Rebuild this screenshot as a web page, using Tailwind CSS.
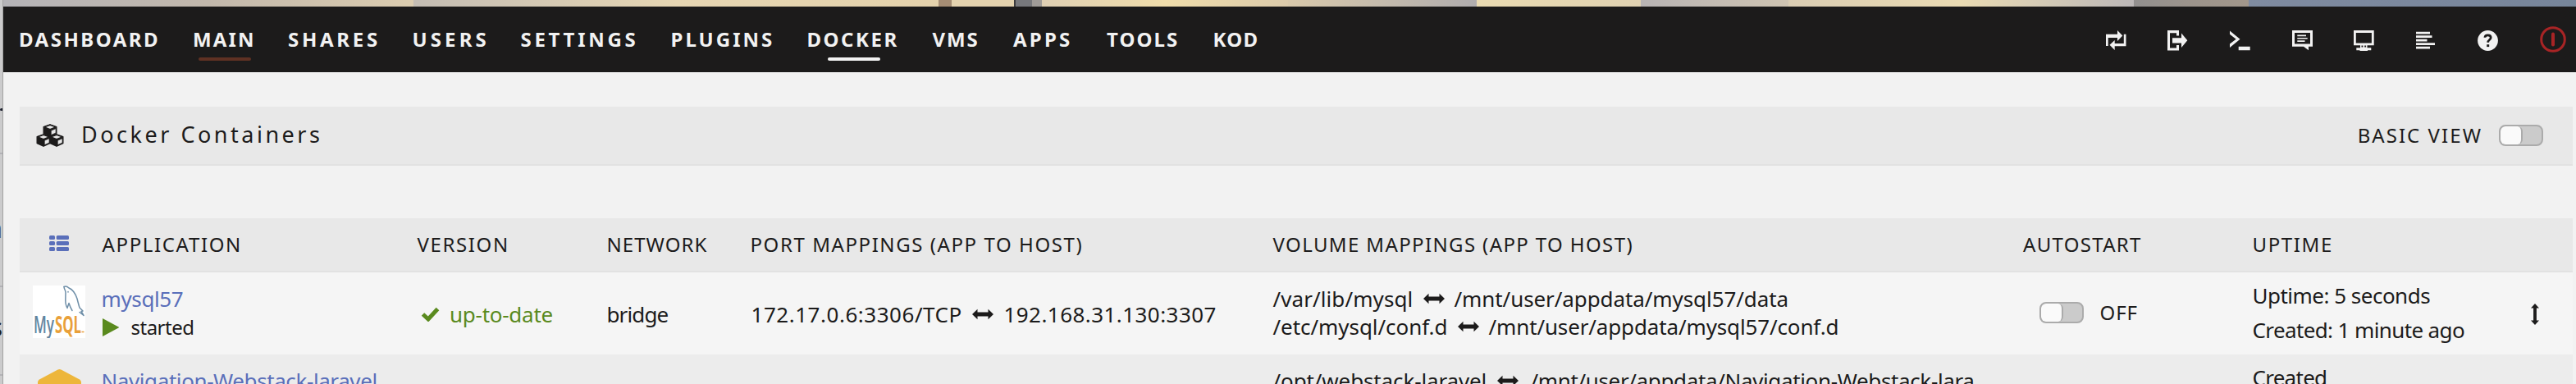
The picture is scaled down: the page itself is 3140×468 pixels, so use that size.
<!DOCTYPE html>
<html lang="en">
<head>
<meta charset="utf-8">
<title>Docker Containers</title>
<script src="https://cdn.jsdelivr.net/npm/@tailwindcss/browser@4"></script>
</head>
<body class="w-[3140px] h-[468px] overflow-hidden bg-[#f2f2f2] text-[#1c1b1b] font-['Noto_Sans',sans-serif] whitespace-nowrap">
<svg class="hidden">
  <symbol id="lr" viewBox="0 0 26 14"><path d="M0 7 6.5 .8V4.6H19.5V.8L26 7l-6.500 6.200V9.400H6.500v3.800z" fill="#1c1b1b"/></symbol>
</svg>
<div class="flex w-full h-full">

  <!-- edge of the window behind -->
  <div class="w-1 h-full shrink-0 overflow-hidden bg-[#cbcbcc] border-r border-[#a2a2a2] text-[30px] leading-[30px]">
    <div class="h-[132px]"></div>
    <div class="h-[3px] bg-[#1e2230] rounded-l"></div>
    <div class="h-[51px]"></div>
    <div class="h-[2px] bg-[#b2b2b6]"></div>
    <div class="h-[76px]"></div>
    <div class="h-[30px] flex justify-end text-[#4a4e55]"><span>a</span></div>
    <div class="h-[54px]"></div>
    <div class="h-[2px] bg-[#b2b2b6]"></div>
    <div class="h-[34px]"></div>
    <div class="h-[30px] flex justify-end"><span>s</span></div>
    <div class="h-[42px]"></div>
    <div class="h-[2px] bg-[#b2b2b6]"></div>
  </div>

  <div class="flex-1 min-w-0">
    <!-- banner strip -->
    <div class="h-2 flex">
      <div class="w-[500px] bg-linear-to-r from-[#b5b4b8] via-[#c2b8ac] to-[#dccdb0]"></div>
      <div class="w-[640px] bg-linear-to-r from-[#c4bdb4] via-[#e6d6b3] to-[#e4d2ac]"></div>
      <div class="w-[16px] bg-[#a58d74]"></div>
      <div class="w-[76px] bg-[#e4d3af]"></div>
      <div class="w-[22px] bg-[#77787c] border-l-2 border-[#3c3b3c]"></div>
      <div class="w-[12px] bg-[#a09c98]"></div>
      <div class="w-[300px] bg-linear-to-r from-[#dfd0b4] via-[#f0ddab] to-[#dccbab]"></div>
      <div class="w-[230px] bg-linear-to-r from-[#d9c9ab] to-[#b0adae]"></div>
      <div class="w-[200px] bg-linear-to-r from-[#eadbb2] to-[#e0d2b2]"></div>
      <div class="w-[180px] bg-linear-to-r from-[#b8b4b4] to-[#cfc4b2]"></div>
      <div class="w-[421px] bg-linear-to-r from-[#dacdb3] via-[#eadbb3] to-[#bcb8b8]"></div>
      <div class="w-[140px] bg-linear-to-r from-[#92908f] via-[#9c948c] to-[#a2978b]"></div>
      <div class="flex-1 bg-linear-to-r from-[#7f8ba0] to-[#77859a]"></div>
    </div>

    <!-- navigation -->
    <nav class="h-20 bg-[#1c1b1b] text-[#f2f2f2] flex items-center justify-between pl-[19px]">
      <div class="grid grid-cols-[212px_116px_151.500px_132px_183px_166px_153px_98.500px_114px_129.500px_90px] h-20 text-[24px] leading-[79px] font-bold">
        <div class="tracking-[2.49px]">DASHBOARD</div>
        <div class="tracking-[2.14px]">MAIN<div class="w-16 h-1 ml-[7px] -mt-[17px] rounded-full bg-[#5f3123]"></div></div>
        <div class="tracking-[3.72px]">SHARES</div>
        <div class="tracking-[4.11px]">USERS</div>
        <div class="tracking-[3.71px]">SETTINGS</div>
        <div class="tracking-[3.01px]">PLUGINS</div>
        <div class="tracking-[2.53px]">DOCKER<div class="w-16 h-1 ml-[25px] -mt-[17px] rounded-full bg-[#f2f2f2]"></div></div>
        <div class="tracking-[1.88px]">VMS</div>
        <div class="tracking-[3.19px]">APPS</div>
        <div class="tracking-[2.06px]">TOOLS</div>
        <div class="tracking-[1.28px]">KOD</div>
      </div>
      <div class="flex items-center gap-[50.600px] pr-3 pt-[2px] h-20">
        <svg class="w-[25px] h-[25px]" viewBox="0 0 25 25" fill="#f2f2f2"><path d="M0 4.700H14V0l6.300 6.500L14 13V9H2.700V19H0zM24.500 4.700v14.600H10.700V24L4.500 17.700 10.700 12v4H21.800V4.700z"/></svg>
        <svg class="w-[25px] h-[25px]" viewBox="0 0 25 25" fill="#f2f2f2"><path d="M0 0H14V6.500H11V3.200H3V21.400H11V18H14V24.600H0zM6 9.300H17V3.500L24.300 12.300 17 21V15.500H6z"/></svg>
        <svg class="w-[25px] h-[25px]" viewBox="0 0 25 25" fill="#f2f2f2"><path d="M0 .5 12.500 10.700 0 21V16.600L7.600 10.700 0 4.800zM10.700 19.800H24.700V24.200H10.700z"/></svg>
        <svg class="w-[25px] h-[25px]" viewBox="0 0 25 25" fill="#f2f2f2"><path fill-rule="evenodd" d="M0 0H25V19.700H20V24.200L14 19.700H0zM3 3V16.600H22V3z"/><path d="M6.300 5.600H17V7.200H6.300zM6.300 9H18.700V10.600H6.300zM6.300 12.300H15.500V13.900H6.300z"/></svg>
        <svg class="w-[25px] h-[25px]" viewBox="0 0 25 25" fill="#f2f2f2"><path fill-rule="evenodd" d="M0 0H24.700V18.300H16.500V21.300H21.300V24.300H17V25H7.500V24.300H3.300V21.300H8V18.300H0zM2.800 3V15.400H21.900V3zM9.500 18.500V20.500H11.400V18.500zM13.200 18.500V20.500H15.100V18.500z"/></svg>
        <svg class="w-[25px] h-[25px]" viewBox="0 0 25 25" fill="#f2f2f2"><path d="M0 1.700H17V4.600H0zM0 6.200H19.500V9H0zM0 10.700H13.500V13.600H0zM0 15.200H23V18H0zM0 19.700H17V22.600H0z"/></svg>
        <svg class="w-[25px] h-[25px]" viewBox="0 0 25 25"><circle cx="12.500" cy="12.500" r="12.400" fill="#f2f2f2"/><path d="M8.900 8.800C9 6.600 10.500 5.800 12.500 5.800c2.200 0 3.700 1.100 3.700 3 0 2.900-3.500 2.600-3.500 6" fill="none" stroke="#1c1b1b" stroke-width="2.700"/><path d="M11.200 17.200h3v2.900h-3z" fill="#1c1b1b"/></svg>
        <svg class="w-8 h-8 -mt-[2px]" viewBox="0 0 32 32" fill="none" stroke="#a82425"><circle cx="16" cy="16" r="14.300" stroke-width="3"/><path d="M16 9.500v13" stroke-width="4" stroke-linecap="round"/></svg>
      </div>
    </nav>

    <main class="px-5 pr-1 pt-[42px]">
      <!-- page title -->
      <div class="h-[72px] bg-[#e8e8e8] border-b-2 border-[#e2e2e2] flex items-center justify-between pl-5 pr-9">
        <div class="flex items-center">
          <svg class="w-[34px] h-[28px] mr-[21px] -mt-px" viewBox="0 0 34 28">
            <g stroke="#1c1b1b" stroke-width="1.400" stroke-linejoin="round">
              <g id="cube"><path d="M17 .8 24.800 3.600V11.600L17 15.200 9.200 11.600V3.600z" fill="#1c1b1b"/><path d="M17 1.300 24 3.900 17 6.700 10 3.900z" fill="#e8e8e8"/><path d="M18.300 8.200 24 5.800V11L18.300 13.600z" fill="#e8e8e8" stroke-width=".6"/></g>
              <use href="#cube" x="-8" y="12"/><use href="#cube" x="8" y="12"/>
            </g>
          </svg>
          <h1 class="text-[27px] leading-[40px] pb-[2px] tracking-[3.510px]">Docker Containers</h1>
        </div>
        <div class="flex items-center">
          <span class="text-[24px] tracking-[2.050px] mr-[20px]">BASIC VIEW</span>
          <span class="w-[54px] h-[26px] rounded-[8px] border-2 border-[#ababab] bg-[#cbcbcb] overflow-hidden flex"><span class="w-[27px] h-full bg-[#fafafa] border-r-2 border-[#ababab] rounded-[6px]"></span></span>
        </div>
      </div>

      <!-- containers -->
      <div class="mt-16">
        <div class="h-[66px] bg-[#e8e8e8] border-b-2 border-[#e2e2e2] grid grid-cols-[100.500px_382.500px_229.500px_177px_638px_914.500px_278.500px_1fr] text-[24px] leading-[63px]">
          <div class="pl-9 pt-[21px]"><svg class="w-6 h-[19px]" viewBox="0 0 24 19" fill="#5a6fba"><rect width="7" height="5" rx="1.500"/><rect x="8.700" width="15.300" height="5" rx="1.500"/><rect y="7" width="7" height="5" rx="1.500"/><rect x="8.700" y="7" width="15.300" height="5" rx="1.500"/><rect y="14" width="7" height="5" rx="1.500"/><rect x="8.700" y="14" width="15.300" height="5" rx="1.500"/></svg></div>
          <div class="tracking-[1.640px]">APPLICATION</div>
          <div class="tracking-[1.610px] pl-[1.500px]">VERSION</div>
          <div class="tracking-[1.050px] pl-[3px]">NETWORK</div>
          <div class="tracking-[1.580px] pl-px">PORT MAPPINGS (APP TO HOST)</div>
          <div class="tracking-[1.380px]">VOLUME MAPPINGS (APP TO HOST)</div>
          <div class="tracking-[1.300px]">AUTOSTART</div>
          <div class="tracking-[1.620px] pl-px">UPTIME</div>
        </div>

        <div class="h-[100px] bg-[#f5f5f5] grid grid-cols-[100.500px_382.500px_229.500px_177px_638px_914.500px_278.500px_1fr] text-[26px] leading-[34px]">
          <div class="pl-4 pt-4">
            <svg class="w-16 h-16 bg-white" viewBox="0 0 64 64">
              <g fill="none" stroke="#6f8fa8" stroke-width="1.500" stroke-linecap="round" stroke-linejoin="round">
                <path d="M38 1.500C40 .5 42 1 44 3 49 5 52 10 54 16c1 4 2 8 3 11l4 4-2 .500 3 5-5-4"/>
                <path d="M38 1.500c0 3 2 4 2 7 0 4-.500 8 0 13 .500 3 1.500 5 2 6l2-6c1 3 2 6 4 9"/>
                <path d="M43 7.500v.500"/>
              </g>
              <text x="1" y="58" font-family="Open Sans, sans-serif" font-size="29" font-weight="600" fill="#6285a0" textLength="25" lengthAdjust="spacingAndGlyphs">My</text>
              <text x="27" y="58" font-family="Open Sans, sans-serif" font-size="29" font-weight="700" fill="#e9a03a" textLength="32" lengthAdjust="spacingAndGlyphs">SQL</text>
              <path d="M59.500 56.500h3" stroke="#e9a03a" stroke-width="1.500"/>
            </svg>
          </div>
          <div class="pt-[15px]">
            <div class="text-[#5a6fba] tracking-[-0.380px] -ml-px">mysql57</div>
            <div class="flex items-center"><svg class="w-[20.500px] h-[22px] mr-[14.500px]" viewBox="0 0 20.500 22"><path d="M0 0 20.500 11 0 22z" fill="#5a8a1e"/></svg><span class="text-[24px] pt-px tracking-[-0.500px]">started</span></div>
          </div>
          <div class="flex items-center text-[#5a8a1e] pl-[6px] pt-px"><svg class="w-[23px] h-[18px] mr-[12px]" viewBox="0 0 23 18"><path d="M2.500 9 9 15 20.500 2.500" fill="none" stroke="#5a8a1e" stroke-width="5"/></svg><span class="tracking-[-0.260px]">up-to-date</span></div>
          <div class="flex items-center tracking-[-0.880px] pl-[3px] pt-px">bridge</div>
          <div class="flex items-center pl-[2px] pt-px"><span class="tracking-[.53px] w-[269px]">172.17.0.6:3306/TCP</span><svg class="w-[26px] h-[14px] mr-[13px]"><use href="#lr"/></svg><span class="tracking-[.44px]">192.168.31.130:3307</span></div>
          <div class="pt-[15px]">
            <div class="flex items-center"><span class="w-[183px] tracking-[.08px]">/var/lib/mysql</span><svg class="w-[26px] h-[14px] mr-3"><use href="#lr"/></svg><span class="tracking-[-0.090px]">/mnt/user/appdata/mysql57/data</span></div>
            <div class="flex items-center"><span class="w-[225px] tracking-[-0.060px]">/etc/mysql/conf.d</span><svg class="w-[26px] h-[14px] mr-3"><use href="#lr"/></svg><span class="tracking-[-0.140px]">/mnt/user/appdata/mysql57/conf.d</span></div>
          </div>
          <div class="flex items-center pl-[19.500px] pb-[2px]">
            <span class="w-[54px] h-[26px] rounded-[8px] border-2 border-[#ababab] bg-[#cbcbcb] overflow-hidden flex mr-5"><span class="w-[27px] h-full bg-[#fafafa] border-r-2 border-[#ababab] rounded-[6px]"></span></span>
            <span class="text-[24px] tracking-[.9px]">OFF</span>
          </div>
          <div class="flex justify-between pl-px pr-[41px]">
            <div class="pt-[7px] leading-[42px]"><div class="tracking-[-0.510px]">Uptime: 5 seconds</div><div class="tracking-[-0.620px]">Created: 1 minute ago</div></div>
            <svg class="w-[10px] h-[26px] mt-[38px]" viewBox="0 0 10 26"><path d="M5 0 10 5.500H6.900V20.500H10L5 26 0 20.500H3.100V5.500H0z" fill="#1c1b1b"/></svg>
          </div>
        </div>

        <div class="h-[36px] overflow-hidden bg-[#ececec] grid grid-cols-[100.500px_382.500px_229.500px_177px_638px_914.500px_278.500px_1fr] text-[26px] leading-[34px]">
          <div class="pl-[22px] pt-[18px]"><svg class="w-[53px] h-[60px]" viewBox="0 0 53 60"><path d="M24.500 .6q2-1 4 0L51 12.500q2 1.200 2 3.500V44q0 2-2 3.500L28.500 59.400q-2 1-4 0L2 47.500Q0 46 0 44V16q0-2.300 2-3.500z" fill="#edb63b"/></svg></div>
          <div class="pt-[15px] text-[#5a6fba] tracking-[-0.410px] -ml-px">Navigation-Webstack-laravel</div>
          <div></div><div></div><div></div>
          <div class="pt-[15px]"><div class="flex items-center"><span class="w-[273px] tracking-[-0.130px]">/opt/webstack-laravel</span><svg class="w-[26px] h-[14px] mr-[15px]"><use href="#lr"/></svg><span class="tracking-[-0.360px]">/mnt/user/appdata/Navigation-Webstack-lara</span></div></div>
          <div></div>
          <div class="pt-[7px] pl-px leading-[42px] tracking-[-0.730px]">Created</div>
        </div>
      </div>
    </main>
  </div>
</div>
</body>
</html>
